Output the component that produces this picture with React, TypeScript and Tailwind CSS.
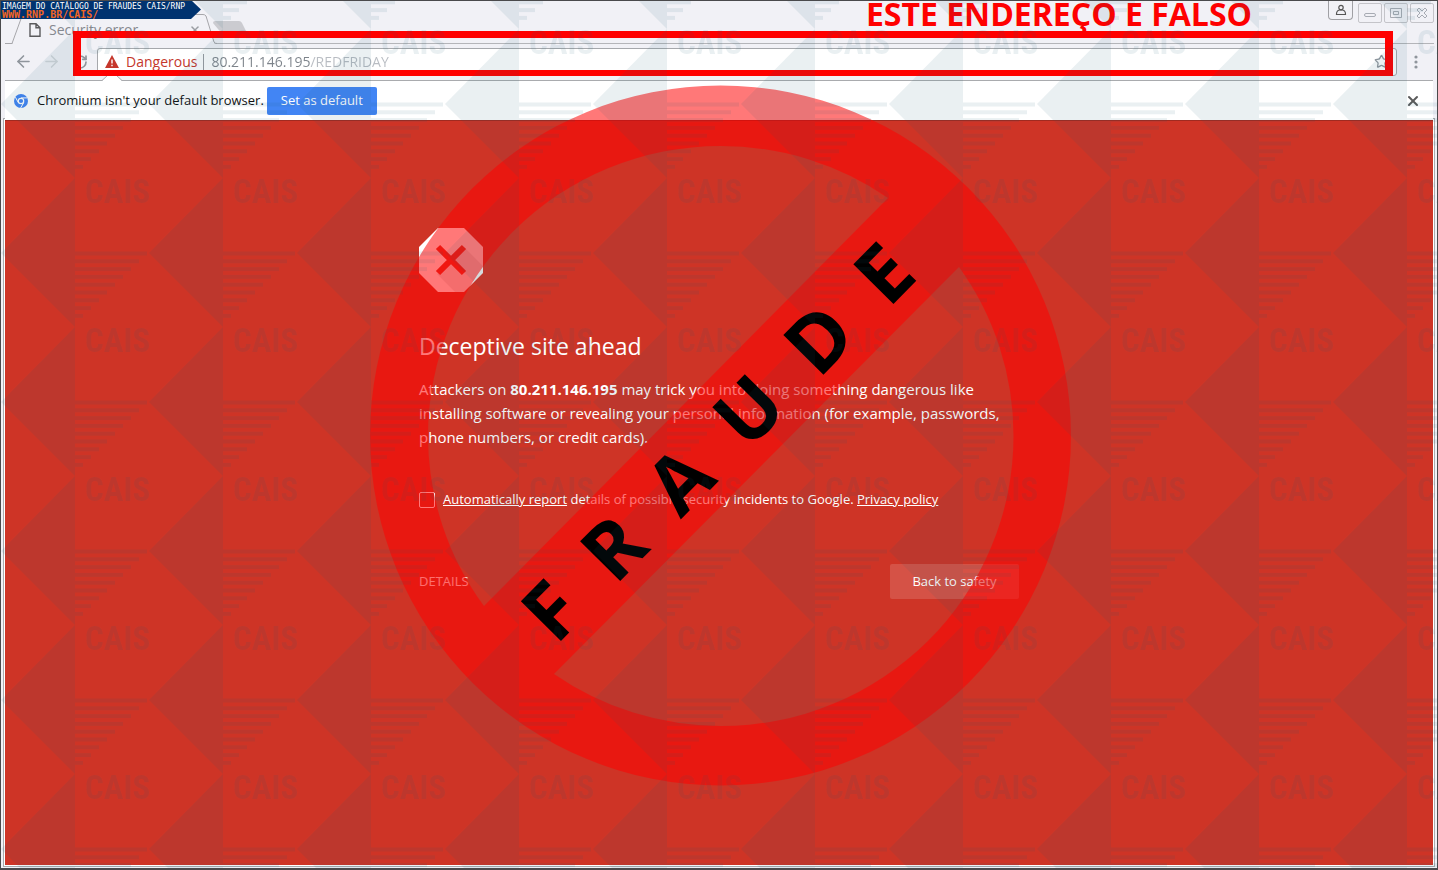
import React from 'react';
import { ArrowLeft, ArrowRight, RotateCw, Star, X } from 'lucide-react';

const LINE_WIDTHS = [72, 64, 56, 48, 40, 32, 24, 16, 8];

const Watermark: React.FC = () => (
    <svg className="pointer-events-none absolute inset-0 h-full w-full" aria-hidden="true">
        <defs>
            <pattern id="cais" x="74" y="28" width="148" height="149" patternUnits="userSpaceOnUse">
                <g fill="#145870" fillOpacity="0.09">
                    <path d="M74 75 L148 0 V149 Z" />
                    {LINE_WIDTHS.map((w, i) => (
                        <rect key={w} x="0" y={73.5 + i * 7.8} width={w} height="4" />
                    ))}
                    <text x="10" y="25" fontSize="33" fontWeight="bold" fontFamily="'Roboto Condensed', 'Noto Sans CJK SC', sans-serif">CAIS</text>
                </g>
            </pattern>
        </defs>
        <rect width="100%" height="100%" fill="url(#cais)" />
    </svg>
);

const FraudStamp: React.FC = () => (
    <div className="pointer-events-none absolute inset-0 flex items-center justify-center">
        <svg width="702" height="702" viewBox="368 84 702 702" className="overflow-visible">
            <path
                fill="#ff0000"
                fillOpacity="0.53"
                fillRule="evenodd"
                d="M370 435.5 A350.5 350 0 1 1 1071 435.5 A350.5 350 0 1 1 370 435.5 Z
                   M484 606 A292.5 290 0 0 1 428 436 A292.5 290 0 0 1 720.5 146 A292.5 290 0 0 1 888 198 Z
                   M554 674 A292.5 290 0 0 0 720.5 726 A292.5 290 0 0 0 1013.5 436 A292.5 290 0 0 0 959 267 Z"
            />
            <text
                transform="translate(556 646) rotate(-45.4)"
                fontSize="79"
                fontWeight="bold"
                fontFamily="'Open Sans', 'Noto Sans', sans-serif"
                className="whitespace-pre"
            >
                {'F  R  A  U  D  E'}
            </text>
        </svg>
    </div>
);

const CatalogBanner: React.FC = () => (
    <div className="absolute -left-px -top-px h-[19px] w-[201px] bg-[#003370] pl-[2px] font-['DejaVu_Sans_Mono',monospace] leading-none [clip-path:polygon(0_0,191px_0,100%_50%,191px_100%,0_100%)]">
        <p className="pt-[3px] text-[8px] leading-[8px] text-white">IMAGEM DO CATÁLOGO DE FRAUDES CAIS/RNP</p>
        <p className="text-[10px] font-bold leading-[7px] text-[#f26522]">WWW.RNP.BR/CAIS/</p>
    </div>
);

const TitleBar: React.FC = () => (
    <header className="-mr-px flex h-[43px] items-start justify-between border-b border-[#b4b5b9]">
        <div className="flex items-end">
            <div className="relative flex h-[43px] w-[208px] items-center pl-6 pt-[14px]">
                <svg className="absolute bottom-0 left-0" width="216" height="30" viewBox="0 0 216 30">
                    <path d="M0 29.5 H7 L17 2 Q18 .5 20 .5 H198 Q200 .5 201 2 L209 28 Q210 29.5 212 29.5" stroke="#a6a6aa" fill="#f1f1f6" />
                    <path d="M8 29.5 H209" stroke="#f1f1f6" />
                </svg>
                <svg className="relative" width="12" height="14" viewBox="0 0 12 14" fill="none" stroke="#5a5a5c" strokeWidth="1.4">
                    <path d="M1 .8 H7 L11 4.8 V13.2 H1 Z M7 .8 V4.8 H11" />
                </svg>
                <span className="relative ml-2 w-[140px] text-sm leading-5 text-[#85888e]">Security error</span>
                <button aria-label="Close tab" className="relative text-[#9a9da2]"><X size={12} strokeWidth={3} /></button>
            </div>
            <svg className="mb-3" width="34" height="11" viewBox="0 0 34 11">
                <path d="M2 0 H26 Q28 0 29 2 L33 10 H8 Q6 10 5 8 L0 2 Q0 0 2 0 Z" fill="#cbcbd0" />
            </svg>
        </div>
        <div className="flex items-start">
            <button aria-label="Profile" className="mr-[5px] flex h-[19px] w-[25px] items-center justify-center rounded-b border border-t-0 border-[#a0a0a4]">
                <svg width="12" height="12" viewBox="0 0 12 12" fill="none" stroke="#555" strokeWidth="1.2">
                    <circle cx="6" cy="3.6" r="2.2" />
                    <path d="M1.5 10.5 Q1.3 6.6 4.5 6 H7.5 Q10.7 6.6 10.5 10.5 Z" />
                </svg>
            </button>
            <div className="flex gap-[2px]">
                {['Minimize', 'Maximize', 'Close'].map(name => (
                    <button key={name} aria-label={name} className="mt-[2px] flex h-5 w-6 items-center justify-center rounded-[2px] border border-[#c4c4c9]">
                        <svg width="12" height="12" viewBox="0 0 12 12" fill="none" stroke="#a7abb3">
                            {name === 'Minimize' && <rect x=".5" y="6.5" width="11" height="3" rx="1.5" />}
                            {name === 'Maximize' && <path d="M.5 1.5 H11.5 V10.5 H.5 Z M3.5 4.5 H8.5 V7.5 H3.5 Z" />}
                            {name === 'Close' && <path d="M1 3 L3 1 L6 4 L9 1 L11 3 L8 6 L11 9 L9 11 L6 8 L3 11 L1 9 L4 6 Z" />}
                        </svg>
                    </button>
                ))}
            </div>
        </div>
    </header>
);

const Toolbar: React.FC = () => (
    <div className="flex h-[37px] items-center border-b border-[#a9abae] pb-px pl-[9px] pr-[14px]">
        <button aria-label="Back" className="text-[#8f959c]"><ArrowLeft size={19} /></button>
        <button aria-label="Forward" className="ml-[9px] text-[#d2d5da]"><ArrowRight size={19} /></button>
        <button aria-label="Reload" className="ml-[11px] text-[#8f959c]"><RotateCw size={16} strokeWidth={2.5} /></button>
        <div className="ml-[9px] flex h-7 flex-1 items-center rounded-[3px] border border-[#a6a8ac] bg-white px-[7px]">
            <svg width="14" height="13" viewBox="0 0 14 13">
                <path d="M7 0 L14 13 H0 Z" fill="#c5372c" />
                <path d="M7 4.5 V8.5 M7 9.8 V11.3" stroke="#fff" strokeWidth="1.4" />
            </svg>
            <label htmlFor="address" className="ml-[7px] border-r border-[#9a9ca0] pr-[6px] text-sm leading-4 text-[#c5372c]">Dangerous</label>
            <input
                id="address"
                defaultValue="80.211.146.195/REDFRIDAY"
                className="ml-[7px] h-5 flex-1 bg-[linear-gradient(90deg,#7d838a_99px,#b8bcc2_99px)] bg-clip-text text-sm text-transparent outline-none"
            />
            <button aria-label="Bookmark" className="text-[#8f959c]"><Star size={15} /></button>
        </div>
        <button aria-label="Menu" className="ml-4">
            <svg width="6" height="16" viewBox="0 0 6 16" fill="#8f959c">
                <circle cx="3" cy="3" r="1.6" />
                <circle cx="3" cy="8" r="1.6" />
                <circle cx="3" cy="13" r="1.6" />
            </svg>
        </button>
    </div>
);

const InfoBar: React.FC = () => (
    <div className="relative z-10 flex h-[39px] items-center bg-white pl-[9px] pr-3">
        <svg className="absolute left-[97px] top-[-6px]" width="20" height="7" viewBox="0 0 20 7">
            <path d="M0 6 L6 0 H14 L20 6 V7 H0 Z" fill="#fff" />
            <path d="M0 5.5 L6 0 M20 5.5 L14 0" stroke="#a9abae" />
        </svg>
        <svg width="14" height="14" viewBox="0 0 14 14">
            <circle cx="7" cy="7" r="7" fill="#4285f4" />
            <circle cx="7" cy="7" r="2.7" fill="#4285f4" stroke="#fff" strokeWidth="1.2" />
            <path d="M7 3.9 H13.2 M4.3 8.6 L1.4 3.2 M9.7 8.6 L6.6 14" stroke="#fff" strokeWidth="1" />
        </svg>
        <span className="ml-[9px] text-[13px] text-[#111]">Chromium isn't your default browser.</span>
        <button className="ml-[3px] h-7 w-[110px] rounded-[2px] bg-[#4285f4] text-[13px] text-white">Set as default</button>
        <button aria-label="Dismiss" className="ml-auto text-[#5a5a5a]"><X size={16} strokeWidth={3} /></button>
    </div>
);

const WarningPage: React.FC = () => (
    <main className="flex-1 border-t border-[#a02a20] bg-[#ce3426] px-6 pb-10 text-white shadow-[0_0_0_1px_#fff,0_0_0_2px_#a9abae]">
        <div className="mx-auto max-w-[600px] pt-[107px]">
            <svg width="64" height="64" viewBox="0 0 64 64">
                <path d="M19 0 H45 L64 19 V45 L45 64 H19 L0 45 V19 Z" fill="#fff" />
                <path d="M47 21 L64 38 V45 L45 64 H36 L18 46 Z" fill="#000" fillOpacity="0.09" />
                <path d="M19 19 L45 45 M45 19 L19 45" stroke="#e03226" strokeWidth="6" />
            </svg>
            <h1 className="mt-[38px] text-[23px] leading-8">Deceptive site ahead</h1>
            <p className="mt-[15px] text-[15px] leading-6">
                Attackers on <strong>80.211.146.195</strong> may trick you into doing something dangerous like installing software or revealing your personal information (for example, passwords, phone numbers, or credit cards).
            </p>
            <div className="mt-[41px] flex h-5 items-center gap-2 text-[13px]">
                <input id="report" type="checkbox" className="h-4 w-4 appearance-none rounded-[2px] border border-white" />
                <label htmlFor="report">
                    <a href="#report" className="underline">Automatically report</a> details of possible security incidents to Google. <a href="#privacy" className="underline">Privacy policy</a>
                </label>
            </div>
            <div className="mt-[54px] flex items-center justify-between text-[13px]">
                <button className="text-white/90">DETAILS</button>
                <button className="h-[35px] w-[129px] rounded-[2px] bg-white/15">Back to safety</button>
            </div>
        </div>
    </main>
);

const App: React.FC = () => {
    return (
        <div className="relative flex min-h-screen flex-col overflow-hidden border border-b-2 border-[#4a4a4c] bg-[#f1f1f6] font-['Open_Sans','Noto_Sans',sans-serif]">
            <div className="flex flex-1 flex-col px-1 pb-[3px]">
                <TitleBar />
                <Toolbar />
                <InfoBar />
                <WarningPage />
            </div>
            <div className="pointer-events-none absolute inset-0 z-20">
                <FraudStamp />
                <p className="absolute right-[185px] top-[-9px] text-[32px] font-bold leading-[44px] text-[#ff0000]">ESTE ENDEREÇO É FALSO</p>
                <div className="absolute left-[72px] right-11 top-[30px] h-[45px] border-x-8 border-b-[6px] border-t-[7px] border-[#ff0000]" />
                <Watermark />
                <CatalogBanner />
            </div>
        </div>
    );
};

export default App;
